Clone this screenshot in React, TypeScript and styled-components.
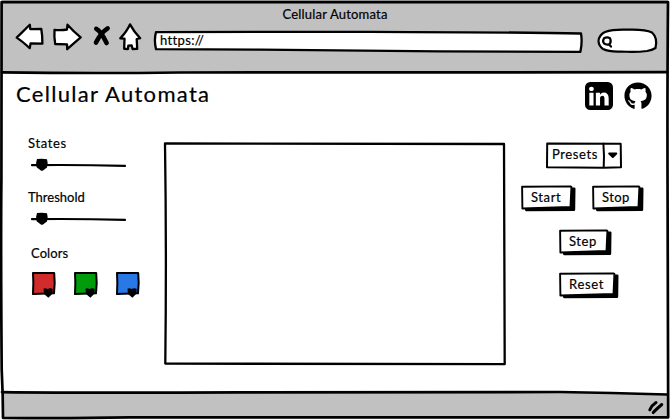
import React from 'react';
import styled, { createGlobalStyle } from 'styled-components';
import { FaGithub } from 'react-icons/fa';

const GlobalStyle = createGlobalStyle`
  * { box-sizing: border-box; }
  body { margin: 0; background: #fff; overflow: hidden; }
  button { font: inherit; color: inherit; }
`;

const Window = styled.div`
  position: relative;
  display: flex;
  flex-direction: column;
  width: 670px;
  height: 420px;
  background: #fff;
  color: #000;
  font: 13px/16px Lato, 'Open Sans', sans-serif;
  -webkit-text-stroke: 0.2px #000;
`;

/* Hand-drawn strokes laid behind or over the part that holds them. */
const Sketch = styled.svg<{ $w?: number }>`
  position: absolute;
  inset: 0;
  width: 100%;
  height: 100%;
  overflow: visible;
  pointer-events: none;
  fill: none;
  stroke: #000;
  stroke-width: ${(p) => p.$w ?? 2};
  stroke-linejoin: round;
  stroke-linecap: round;
`;

const Chrome = styled.header`
  height: 72px;
  margin: 0 2px;
  padding-top: 6px;
  background: #c1c1c1;
`;

const WindowTitle = styled.div`
  text-align: center;
`;

const Line = styled.span<{ $spacing: number; $size?: number }>`
  position: relative;
  font-size: ${(p) => p.$size ?? 13}px;
  letter-spacing: ${(p) => p.$spacing}px;
  white-space: nowrap;
`;

const Toolbar = styled.nav`
  display: flex;
  align-items: flex-start;
  padding-left: 12px;
`;

const NavIcon = styled.svg`
  flex: none;
  height: 30px;
  fill: #fff;
  stroke: #000;
  stroke-width: 2.3;
  stroke-linejoin: round;
  stroke-linecap: round;
`;

const Address = styled.div`
  position: relative;
  width: 428px;
  height: 21px;
  margin: 9px 0 0 9px;
  padding: 1px 0 0 5px;
`;

const Search = styled.div`
  position: relative;
  width: 60px;
  height: 24px;
  margin: 7px 0 0 15px;
`;

const Page = styled.main`
  flex: 1;
  display: flex;
  flex-direction: column;
`;

const PageHeader = styled.div`
  display: flex;
  justify-content: space-between;
  height: 70px;
  padding: 10px 18px 0 16px;
`;

const Title = styled.h1`
  margin: -3px 0 0;
  font-weight: 400;
  line-height: 26px;
`;

const Links = styled.div`
  display: flex;
  gap: 11px;
`;

const BrandMark = styled.svg`
  width: 28px;
  height: 28px;
`;

const GithubMark = styled(FaGithub)`
  width: 28px;
  height: 28px;
`;

const Workspace = styled.div`
  display: flex;
  align-items: flex-start;
`;

const Settings = styled.section`
  width: 136px;
  margin: -7px 0 0 28px;
`;

const Field = styled.div`
  height: 54px;
`;

const Slider = styled.svg`
  display: block;
  width: 100px;
  height: 16px;
  margin-top: 6px;
`;

const ColorField = styled.div`
  padding: 2px 0 0 3px;
`;

const Swatches = styled.div`
  display: flex;
  gap: 16px;
  padding: 9px 0 0 0;
`;

const SwatchIcon = styled.svg`
  width: 26px;
  height: 28px;
  stroke-linejoin: round;
`;

const Canvas = styled.section`
  position: relative;
  width: 342px;
  height: 224px;
`;

const Actions = styled.section`
  width: 124px;
  margin-left: 15px;
  display: flex;
  flex-direction: column;
`;

const Presets = styled.button`
  position: relative;
  display: flex;
  align-items: flex-start;
  width: 76px;
  height: 27px;
  margin-left: 25px;
  padding: 4px 0 0 6px;
  border: 0;
  background: none;
`;

const ButtonRow = styled.div<{ $top: number; $left?: number }>`
  display: flex;
  gap: 17px;
  margin: ${(p) => p.$top}px 0 0 ${(p) => p.$left ?? 0}px;
`;

const ActionButton = styled.button<{ $width: number }>`
  position: relative;
  display: flex;
  align-items: flex-start;
  flex: none;
  width: ${(p) => p.$width}px;
  height: 27px;
  padding: 4px 0 0 10px;
  border: 0;
  background: none;
`;

const StatusBar = styled.footer`
  display: flex;
  justify-content: flex-end;
  height: 28px;
  margin: 0 2px 0;
  background: #c1c1c1;
  clip-path: polygon(0 0, 85% 0, 100% 9%, 100% 91%, 0 91%);
`;

const Grip = styled.svg`
  width: 20px;
  height: 18px;
  margin: 6px 2px 0 0;
`;

function SliderField({ label, spacing }: { label: string; spacing: number }) {
  return (
    <Field>
      <Line $spacing={spacing}>{label}</Line>
      <Slider viewBox="0 0 100 16">
        <path d="M4 8.2 Q48 7.6 97 8.9" fill="none" stroke="#000" strokeWidth="2.2" strokeLinecap="round" />
        <path d="M9 2.1 Q14 1.3 19 2.2 Q20.4 6 19 10.6 L15 13.5 Q13.7 14.2 12.5 13.3 L8.6 10.3 Q7.6 5 9 2.1Z" />
      </Slider>
    </Field>
  );
}

function Swatch({ color }: { color: string }) {
  return (
    <SwatchIcon viewBox="0 0 26 28">
      <path d="M2 3 L23.2 3 Q24.3 13 23 23.3 L2 24.1 Q2.7 13 2 3Z" fill={color} stroke="#000" strokeWidth="2" />
      <path d="M12.5 18.7 Q14.5 17.8 16.5 19 Q19 17.8 21.6 18.7 L21.6 23.4 L17.4 27.8 L13 24Z" />
    </SwatchIcon>
  );
}

function Action({ label, width, spacing }: { label: string; width: number; spacing: number }) {
  const right = width - 3.8;
  return (
    <ActionButton $width={width}>
      <Sketch $w={1.9}>
        <path
          d={`M5.3 25 L${width - 1} 24.7 L${width - 0.7} 3.7 L${width - 3} 3.7 L${right} 21.7 L5 23.5Z`}
          fill="#000"
          strokeWidth="2.4"
        />
        <path d={`M1.1 1.8 L${right - 0.5} 1.4 L${right + 0.2} 2 L${right - 0.7} 22 L1.4 23.5Z`} fill="#fff" />
      </Sketch>
      <Line $spacing={spacing}>{label}</Line>
    </ActionButton>
  );
}

export default function App() {
  return (
    <>
      <GlobalStyle />
      <Window>
        <Chrome>
          <WindowTitle>
            <Line $spacing={0.2}>Cellular Automata</Line>
          </WindowTitle>
          <Toolbar>
            <NavIcon viewBox="14 22 36 30" width="36">
              <path d="M16.7 37.6 L29.8 24.7 L30.3 29.2 L41.3 29 Q42.5 36 42.4 43.7 L30.6 43.4 L29.7 48.2 Q22 41 16.7 37.6Z" />
            </NavIcon>
            <NavIcon viewBox="50 22 36 30" width="36">
              <path d="M54.5 29.8 Q61 30.6 67 29.5 L67.5 24.7 Q74 32 80.7 37.3 Q74 43 67.2 49.2 L67 44.3 L55.2 44 Q54 36 54.5 29.8Z" />
            </NavIcon>
            <NavIcon viewBox="86 22 30 30" width="30">
              <path d="M96.3 28.8 Q101 31 106.6 43 M107.6 28.3 Q100.5 33 96 42.6" fill="none" strokeWidth="4.6" />
            </NavIcon>
            <NavIcon viewBox="116 22 30 30" width="30">
              <path d="M130 24.4 Q134 32 140.2 38.2 L136.7 39 L137.2 48.8 L132.6 49 L131.7 45.5 L128.3 45.6 L128 49 L124.2 48.8 L124.5 38.7 L120.3 38.3 Q127 31 130 24.4Z" />
            </NavIcon>
            <Address>
              <Sketch $w={2.3} viewBox="155 31 428 21" preserveAspectRatio="none">
                <path
                  d="M156 32.1 L370 31.8 Q520 32.2 581 33.5 Q582.5 42 580.4 51.8 L440 51.4 L260 49.6 L156 49.2 Q153.8 40 156 32.1Z"
                  fill="#fff"
                />
              </Sketch>
              <Line $spacing={0.35}>https://</Line>
            </Address>
            <Search>
              <Sketch $w={2.2} viewBox="598 29 60 24">
                <path
                  d="M605 32 Q613 29.3 626 29.7 Q645 28.9 652 32.5 Q658 38 655.5 48 Q652 50.2 647 51 Q635 52.5 621 51.5 Q609 52 603 49 Q598.8 46 598.5 41 Q599 35 605 32Z"
                  fill="#fff"
                />
                <path d="M604 38.3 Q607 36.5 610 38.2 Q611.5 41.5 609.8 44 Q606.5 45.4 604 43.4 Q602.2 41 604 38.3Z M609 44.5 L611 46.6" />
              </Sketch>
            </Search>
          </Toolbar>
        </Chrome>

        <Page>
          <PageHeader>
            <Title>
              <Line $size={22} $spacing={1.3}>Cellular Automata</Line>
            </Title>
            <Links>
              <BrandMark viewBox="0 0 1536 1536">
                <path
                  fillRule="evenodd"
                  d="M237 1286h231v-694h-231zM483 378q-1-52-36-86t-93-34-94.5 34-36.5 86q0 51 35.5 85.5t92.5 34.5h1q59 0 95-34.5t36-85.5zM1068 1286h231v-398q0-154-73-233t-193-79q-136 0-209 117h2v-101h-231q3 66 0 694h231v-388q0-38 7-56 15-35 45-59.5t74-24.5q116 0 116 157zM1536 288v960q0 119-84.500 203.500t-203.500 84.500h-960q-119 0-203.500-84.500t-84.500-203.500v-960q0-119 84.500-203.500t203.500-84.500h960q119 0 203.500 84.500t84.500 203.500z"
                />
              </BrandMark>
              <GithubMark />
            </Links>
          </PageHeader>

          <Workspace>
            <Settings>
              <SliderField label="States" spacing={0.65} />
              <SliderField label="Threshold" spacing={0} />
              <ColorField>
                <Line $spacing={0.1}>Colors</Line>
                <Swatches>
                  <Swatch color="#d12b2b" />
                  <Swatch color="#009c0c" />
                  <Swatch color="#2878e6" />
                </Swatches>
              </ColorField>
            </Settings>
            <Canvas>
              <Sketch $w={2.3} viewBox="164 142 342 224">
                <path d="M165 143.4 L504 144 Q504.3 220 504.7 364.2 L165.3 363.6 Q166.6 250 165 143.4Z" />
              </Sketch>
            </Canvas>
            <Actions>
              <Presets>
                <Sketch $w={2} viewBox="546 142 76 27">
                  <path d="M547.2 143.4 L620.7 143.7 L621 167.2 L604 167.8 L547 167.3Z M603.4 143.5 Q604.4 156 603.7 167.6" fill="#fff" />
                  <path d="M609.2 153.5 L616.3 153.5 L612.8 157Z" fill="#000" />
                </Sketch>
                <Line $spacing={0.6}>Presets</Line>
              </Presets>
              <ButtonRow $top={16}>
                <Action label="Start" width={54} spacing={0.6} />
                <Action label="Stop" width={51} spacing={0.4} />
              </ButtonRow>
              <ButtonRow $top={17} $left={38}>
                <Action label="Step" width={52} spacing={0.6} />
              </ButtonRow>
              <ButtonRow $top={16} $left={38}>
                <Action label="Reset" width={59} spacing={0.7} />
              </ButtonRow>
            </Actions>
          </Workspace>
        </Page>

        <StatusBar>
          <Grip viewBox="646 398 20 18">
            <path
              d="M649.8 409.8 Q652 405 656 402.5 M653.2 412.6 Q656 409.500 661.8 404.5"
              fill="none"
              stroke="#000"
              strokeWidth="3"
              strokeLinecap="round"
            />
          </Grip>
        </StatusBar>

        <Sketch $w={2.7} viewBox="0 0 670 420">
          <path d="M1.6 2 L668 2.2 Q667.2 90 667.6 200 L668.2 417.3 Q450 418 130 417.4 Q60 418.700 3 417.8 Q3 395 1.7 370 Q0.7 240 1.4 180 L1.6 2Z" />
          <path d="M2 72.3 Q90 73.6 180 72.5 L667 72.2 M2 392.1 Q80 393 240 392.4 L560 392 Q610 392.6 667 394.500" />
        </Sketch>
      </Window>
    </>
  );
}
